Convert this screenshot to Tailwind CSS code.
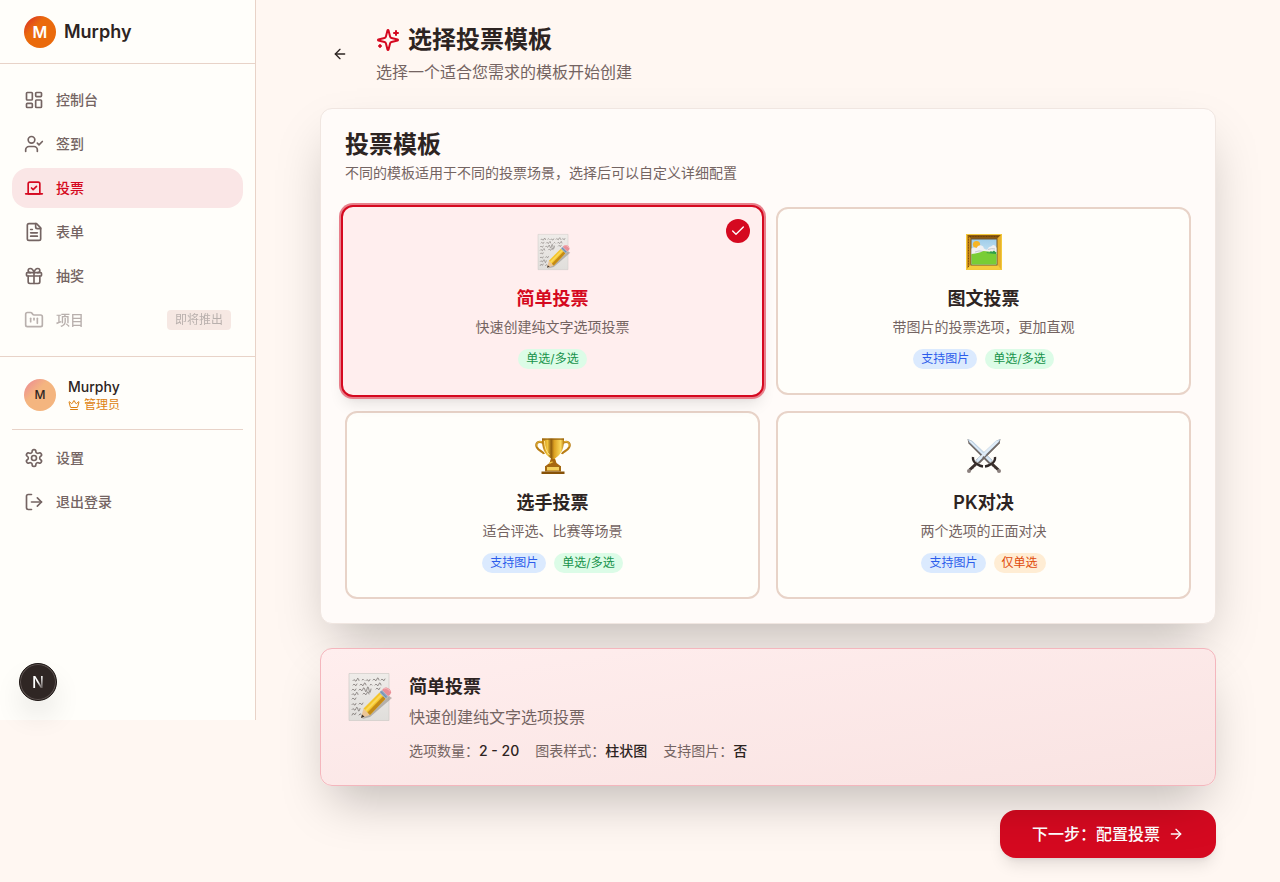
<!DOCTYPE html>
<html lang="zh-CN">
<head>
    <meta charset="UTF-8">
    <meta name="viewport" content="width=device-width, initial-scale=1.0">
    <title>选择投票模板</title>
    <script src="https://cdn.jsdelivr.net/npm/@tailwindcss/browser@4"></script>
</head>
<body class="min-h-screen bg-[#fff7f2] font-['Inter','Noto_Sans_CJK_SC',sans-serif] text-[#2d2422]">

    <!-- Emoji artwork shared by the cards -->
    <svg class="absolute size-0" aria-hidden="true">
        <defs>
            <linearGradient id="gold" x1="0" x2="1"><stop offset="0" stop-color="#b5740c"/><stop offset=".25" stop-color="#f3c63c"/><stop offset=".42" stop-color="#8f5c0e"/><stop offset=".55" stop-color="#dba021"/><stop offset=".85" stop-color="#fbd95c"/><stop offset="1" stop-color="#b8790f"/></linearGradient>
            <linearGradient id="paper" x1="0" y1="0" x2="0" y2="1"><stop offset="0" stop-color="#efece9"/><stop offset="1" stop-color="#e0dedb"/></linearGradient>
            <linearGradient id="sky" x1="0" y1="0" x2="0" y2="1"><stop offset="0" stop-color="#9fcdea"/><stop offset="1" stop-color="#e3f1f7"/></linearGradient>
        </defs>
        <symbol id="memo" viewBox="0 0 48 48">
            <path d="M4 .5h40v47H4z" fill="url(#paper)" stroke="#cfcbc7" stroke-width=".7"/>
            <g fill="none" stroke="#7a7471" stroke-width=".8" stroke-linecap="round">
                <path d="M8 7.500q1-2 2 0t2-1 2 1M17 7q1-2 2 0M21 7.500q1-2 2 0t2-1M28 7q1-2 2 0t2-1 2 1M36 7q1-2 2 0t2-1"/>
                <path d="M8 12q1-2 2 0t2-1M15 12q1-2 2 0t2-1 2 1M25 12q1-2 2 0M30 12q1-2 2 0t2-1 2 1"/>
                <path d="M7 17q1-2 2 0t2-1M14 17q1-2 2 0t2-1 2 1 2-1 2 1 2-1M31 16q1-2 2 0t2-1"/>
                <path d="M7 21.500q1-2 2 0t2-1 2 1M18 21q1-2 2 0t2-1 2 1"/>
                <path d="M7 26q1-2 2 0t2-1"/>
                <path d="M7 31.500q1-2 2 0t2-1M14 31q1-2 2 0t2-1"/>
                <path d="M7 36.500q1-2 2 0t2-1 2 1 2-1"/>
                <path d="M7 42q1-3 2-1t2-1M14 42q1-2 2-1"/>
            </g>
            <path d="M17 46 44 23l3 2-22 19z" fill="#77706b" opacity=".45"/>
            <path d="m18.500 35.500-2.500 9.500 9-3z" fill="#ecc596"/>
            <path d="m17 41.500-1 3.500 3.600-1.200z" fill="#39302c"/>
            <path d="M18.500 35.500 34.500 19.500l6 6.300L25 42z" fill="#f4c52b"/>
            <path d="m22.500 39.500 15.700-16.200 2.300 2.500L25 42z" fill="#c48a17"/>
            <path d="m20 37 15.800-16 1.500 1.500L21.500 38.500z" fill="#fbd85a"/>
            <path d="m34.500 19.500 2.600-2.500 6 6.300-2.600 2.500z" fill="#8fa9c4"/>
            <path d="m35.700 18.300 6 6.200" stroke="#5c7896" stroke-width=".7"/>
            <path d="m37.100 17 1.700-1.700c3-2.700 9.500 2.500 6.500 6l-2.200 2z" fill="#e98e96"/>
            <path d="m39 16c2-1.500 5 .5 6 2.500" stroke="#f7bcc0" fill="none"/>
        </symbol>
        <symbol id="picture" viewBox="0 0 36 36">
            <rect width="36" height="36" rx="1" fill="#d99a17"/>
            <path d="M1 1h34l-4 4H5z" fill="#8d5a10"/>
            <path d="M1 1v34l4-4V5z" fill="#d08f18"/>
            <path d="M35 1v34l-4-4V5z" fill="#e8b12c"/>
            <path d="M1 35h34l-4-5H5z" fill="#f6cc3d"/>
            <path d="M.500.500h35v35H.500z" fill="none" stroke="#f3c93b"/>
            <path d="M2.500 33V2.500H33" fill="none" stroke="#5f3b0b" stroke-width=".8" stroke-dasharray="1 .6"/>
            <rect x="5" y="5" width="26" height="26" fill="url(#sky)" stroke="#6f5632"/>
            <circle cx="10.500" cy="10.500" r="3.600" fill="#f6b526"/>
            <path d="M5.500 20.500v-6q3-1.500 5-.5 1.500-3.500 5-2.500 2 .500 2.500 3 1.500 1.500 3.500 1 1-3 3.500-3l2-1.500q2.500 0 3.500 3v6z" fill="#f1f0f1"/>
            <path d="M9 18q4-2 8-.5M22 15.500q4-1.500 7-.5" stroke="#c4c9d1" fill="none"/>
            <path d="M5.500 20q8-1 12-3 8 1 13 1v12.500h-25z" fill="#79cd35"/>
            <path d="m20 19 2-1 1 1 2-2 1 1 2-1.500 2 2v1.500z" fill="#2f9e4b"/>
        </symbol>
        <symbol id="trophy" viewBox="0 0 36 36">
            <path d="M8.500 5C3 2 0 5.500 2 9.500s6 3.500 7 6.500M27.500 5C33 2 36 5.500 34 9.500s-6 3.500-7 6.500" fill="none" stroke="#b97d14" stroke-width="2.200"/>
            <path d="M8.500 4.500C3 2 .500 5.500 2.500 9M27.500 4.500C33 2 35.500 5.500 33.500 9" fill="none" stroke="#f5cd4a" stroke-width=".8"/>
            <path d="M7 .500h22c.5 9-2.500 16-9 20l1 4h-6l1-4C9.500 16.500 6.500 9.500 7 .500z" fill="url(#gold)"/>
            <path d="M7 .500h22v1.200H7z" fill="#946111"/>
            <path d="M9.500 3c0 6 2 11 5 14" fill="none" stroke="#ffe58a" stroke-width="1"/>
            <path d="M16 21h4l1.500 4 4 3h-15l4-3z" fill="#a76710"/>
            <path d="M10 28h16v5.500H10z" fill="#a46a13"/>
            <path d="M12 29h12v3.500H12z" fill="#f4cf5c"/>
            <path d="M6.500 33.500h23V36h-23z" fill="#875208"/>
            <path d="m14 24.500 3-1 1.500.5-4 2z" fill="#f5cb49"/>
        </symbol>
        <symbol id="swords" viewBox="0 0 36 36">
            <g id="sword">
                <path d="m34.500 1-1 4.500L13 26l-3.500-3.500L30 3z" fill="#6b625f"/>
                <path d="m34.500 1-2 3.500L12 24.500l-2.500-2L29.500 3z" fill="#c7dbed"/>
                <path d="M32 3 11 23.500" stroke="#f2f8fd" stroke-width=".8"/>
                <path d="M7 19q-.5 4 3 6.500T17 28.500" fill="none" stroke="#302826" stroke-width="2.400"/>
                <path d="m10.500 25.500-7 6.500" stroke="#3a302d" stroke-width="3"/>
                <path d="m9 28 1 1m-3 1 1 1" stroke="#948783" stroke-width=".6"/>
                <circle cx="3" cy="33" r="2" fill="#8b807d"/>
            </g>
            <use href="#sword" transform="matrix(-1 0 0 1 36 0)"/>
            <path d="m31.500 3-19 18.500" stroke="#e0ecf7" stroke-width="2"/>
            <path d="m33.500 4.500-20 20" stroke="#716967" stroke-width="1.200"/>
        </symbol>
    </svg>

    <div class="flex items-start">

        <!-- Sidebar -->
        <aside class="relative flex h-[720px] w-64 shrink-0 flex-col border-r border-[#e8d3c8] bg-[#fffefa]">
            <div class="flex h-16 items-center gap-2 border-b border-[#e8d3c8] px-6">
                <div class="flex size-8 items-center justify-center rounded-full bg-linear-to-br from-[#d50920] to-[#ea6a0c] to-35% font-semibold text-white">M</div>
                <span class="text-lg font-semibold">Murphy</span>
            </div>

            <nav class="flex flex-col gap-1 border-b border-[#e8d3c8] px-3 py-4 text-sm font-medium text-[#746462]" aria-label="主导航">
                <a href="#" class="flex h-10 items-center gap-3 rounded-2xl px-3">
                    <svg class="size-5" viewBox="0 0 24 24" fill="none" stroke="currentColor" stroke-width="2" stroke-linecap="round" stroke-linejoin="round" aria-hidden="true"><rect width="7" height="9" x="3" y="3" rx="1"/><rect width="7" height="5" x="14" y="3" rx="1"/><rect width="7" height="9" x="14" y="12" rx="1"/><rect width="7" height="5" x="3" y="16" rx="1"/></svg>
                    控制台
                </a>
                <a href="#" class="flex h-10 items-center gap-3 rounded-2xl px-3">
                    <svg class="size-5" viewBox="0 0 24 24" fill="none" stroke="currentColor" stroke-width="2" stroke-linecap="round" stroke-linejoin="round" aria-hidden="true"><path d="m16 11 2 2 4-4"/><path d="M16 21v-2a4 4 0 0 0-4-4H6a4 4 0 0 0-4 4v2"/><circle cx="9" cy="7" r="4"/></svg>
                    签到
                </a>
                <a href="#" class="flex h-10 items-center gap-3 rounded-2xl bg-[#fae6e6] px-3 text-[#d50920]" aria-current="page">
                    <svg class="size-5" viewBox="0 0 24 24" fill="none" stroke="currentColor" stroke-width="2" stroke-linecap="round" stroke-linejoin="round" aria-hidden="true"><path d="m9 12 2 2 4-4"/><path d="M5 7c0-1.100.9-2 2-2h10a2 2 0 0 1 2 2v12H5V7Z"/><path d="M22 19H2"/></svg>
                    投票
                </a>
                <a href="#" class="flex h-10 items-center gap-3 rounded-2xl px-3">
                    <svg class="size-5" viewBox="0 0 24 24" fill="none" stroke="currentColor" stroke-width="2" stroke-linecap="round" stroke-linejoin="round" aria-hidden="true"><path d="M15 2H6a2 2 0 0 0-2 2v16a2 2 0 0 0 2 2h12a2 2 0 0 0 2-2V7Z"/><path d="M14 2v4a2 2 0 0 0 2 2h4"/><path d="M10 9H8"/><path d="M16 13H8"/><path d="M16 17H8"/></svg>
                    表单
                </a>
                <a href="#" class="flex h-10 items-center gap-3 rounded-2xl px-3">
                    <svg class="size-5" viewBox="0 0 24 24" fill="none" stroke="currentColor" stroke-width="2" stroke-linecap="round" stroke-linejoin="round" aria-hidden="true"><rect x="3" y="8" width="18" height="4" rx="1"/><path d="M12 8v13"/><path d="M19 12v7a2 2 0 0 1-2 2H7a2 2 0 0 1-2-2v-7"/><path d="M7.500 8a2.500 2.500 0 0 1 0-5A4.800 8 0 0 1 12 8a4.800 8 0 0 1 4.500-5 2.500 2.500 0 0 1 0 5"/></svg>
                    抽奖
                </a>
                <a href="#" class="flex h-10 items-center gap-3 rounded-2xl px-3 opacity-50" aria-disabled="true">
                    <svg class="size-5" viewBox="0 0 24 24" fill="none" stroke="currentColor" stroke-width="2" stroke-linecap="round" stroke-linejoin="round" aria-hidden="true"><path d="M4 20h16a2 2 0 0 0 2-2V8a2 2 0 0 0-2-2h-7.930a2 2 0 0 1-1.660-.9l-.820-1.200A2 2 0 0 0 7.930 3H4a2 2 0 0 0-2 2v13c0 1.100.9 2 2 2Z"/><path d="M8 10v4"/><path d="M12 10v2"/><path d="M16 10v6"/></svg>
                    <span class="flex-1">项目</span>
                    <span class="rounded bg-[#eed4ce] px-2 py-0.5 text-xs font-normal">即将推出</span>
                </a>
            </nav>

            <div class="p-3">
                <div class="flex items-center gap-3 px-3 py-2">
                    <div class="flex size-8 items-center justify-center rounded-full bg-linear-to-br from-[#ea8494] to-[#f4b57f] to-40% text-xs font-medium">M</div>
                    <div>
                        <p class="text-sm font-medium">Murphy</p>
                        <p class="flex items-center gap-1 text-xs text-[#dd8110]">
                            <svg class="size-3" viewBox="0 0 24 24" fill="none" stroke="currentColor" stroke-width="2" stroke-linecap="round" stroke-linejoin="round" aria-hidden="true"><path d="M11.562 3.266a.5.5 0 0 1 .876 0L15.390 8.870a1 1 0 0 0 1.516.294L21.183 5.500a.5.5 0 0 1 .798.519l-2.834 10.246a1 1 0 0 1-.956.734H5.810a1 1 0 0 1-.957-.734L2.020 6.020a.5.5 0 0 1 .798-.519l4.276 3.664a1 1 0 0 0 1.516-.294z"/><path d="M5 21h14"/></svg>
                            管理员
                        </p>
                    </div>
                </div>
                <div class="mt-2 flex flex-col gap-1 border-t border-[#e8d3c8] pt-2 text-sm font-medium text-[#746462]">
                    <a href="#" class="flex h-10 items-center gap-3 px-3">
                        <svg class="size-5" viewBox="0 0 24 24" fill="none" stroke="currentColor" stroke-width="2" stroke-linecap="round" stroke-linejoin="round" aria-hidden="true"><path d="M12.220 2h-.440a2 2 0 0 0-2 2v.180a2 2 0 0 1-1 1.730l-.430.250a2 2 0 0 1-2 0l-.150-.080a2 2 0 0 0-2.730.730l-.220.380a2 2 0 0 0 .730 2.730l.150.100a2 2 0 0 1 1 1.720v.510a2 2 0 0 1-1 1.740l-.150.090a2 2 0 0 0-.730 2.730l.220.380a2 2 0 0 0 2.730.730l.150-.080a2 2 0 0 1 2 0l.430.250a2 2 0 0 1 1 1.730V20a2 2 0 0 0 2 2h.440a2 2 0 0 0 2-2v-.180a2 2 0 0 1 1-1.730l.430-.250a2 2 0 0 1 2 0l.150.080a2 2 0 0 0 2.730-.730l.220-.390a2 2 0 0 0-.730-2.730l-.150-.080a2 2 0 0 1-1-1.740v-.500a2 2 0 0 1 1-1.740l.150-.090a2 2 0 0 0 .730-2.730l-.220-.380a2 2 0 0 0-2.730-.730l-.150.080a2 2 0 0 1-2 0l-.430-.250a2 2 0 0 1-1-1.730V4a2 2 0 0 0-2-2z"/><circle cx="12" cy="12" r="3"/></svg>
                        设置
                    </a>
                    <button type="button" class="flex h-10 items-center gap-3 px-3">
                        <svg class="size-5" viewBox="0 0 24 24" fill="none" stroke="currentColor" stroke-width="2" stroke-linecap="round" stroke-linejoin="round" aria-hidden="true"><path d="m16 17 5-5-5-5"/><path d="M21 12H9"/><path d="M9 21H5a2 2 0 0 1-2-2V5a2 2 0 0 1 2-2h4"/></svg>
                        退出登录
                    </button>
                </div>
            </div>

            <!-- Dev tools badge -->
            <button type="button" class="absolute bottom-[19px] left-[19px] flex size-[38px] items-center justify-center rounded-full border border-[#1d1614] bg-[#2f2624] text-base font-medium shadow-[inset_0_0_0_1px_#5e5452,0_16px_32px_-8px_#0000003d]" aria-label="Next.js">
                <span class="bg-linear-to-br from-white from-50% to-[#2f2624] to-90% bg-clip-text text-transparent">N</span>
            </button>
        </aside>

        <!-- Content -->
        <main class="min-w-0 flex-1 py-6">
            <div class="mx-auto flex max-w-4xl flex-col gap-6">
                <header class="flex items-center gap-4">
                    <button type="button" class="flex size-10 items-center justify-center" aria-label="返回">
                        <svg class="size-4" viewBox="0 0 24 24" fill="none" stroke="currentColor" stroke-width="2" stroke-linecap="round" stroke-linejoin="round" aria-hidden="true"><path d="m12 19-7-7 7-7"/><path d="M19 12H5"/></svg>
                    </button>
                    <div>
                        <h1 class="flex items-center gap-2 text-2xl font-semibold">
                            <svg class="size-6 text-[#d50920]" viewBox="0 0 24 24" fill="none" stroke="currentColor" stroke-width="2" stroke-linecap="round" stroke-linejoin="round" aria-hidden="true"><path d="M9.937 15.500A2 2 0 0 0 8.500 14.063l-6.135-1.582a.5.5 0 0 1 0-.962L8.500 9.936A2 2 0 0 0 9.937 8.500l1.582-6.135a.5.5 0 0 1 .963 0L14.063 8.500A2 2 0 0 0 15.500 9.937l6.135 1.581a.5.5 0 0 1 0 .964L15.500 14.063a2 2 0 0 0-1.437 1.437l-1.582 6.135a.5.5 0 0 1-.963 0z"/><path d="M20 3v4"/><path d="M22 5h-4"/><path d="M4 17v2"/><path d="M5 18H3"/></svg>
                            选择投票模板
                        </h1>
                        <p class="mt-1 text-[#746462]">选择一个适合您需求的模板开始创建</p>
                    </div>
                </header>

                <section class="relative rounded-xl border border-[#f0e6e1] bg-[#fffbf9] p-6 shadow-2xl">
                    <h2 class="text-2xl leading-none font-semibold">投票模板</h2>
                    <p class="mt-1.5 text-sm text-[#746462]">不同的模板适用于不同的投票场景，选择后可以自定义详细配置</p>

                    <div class="mt-6 grid grid-cols-2 gap-4">
                        <button type="button" class="relative -mx-1 -my-0.5 flex flex-col items-center rounded-xl border-2 border-[#d50920] bg-[#ffeeee] px-6 py-[26px] shadow-lg ring-2 ring-[#e87f8b]" aria-pressed="true">
                            <span class="absolute top-3 right-3 flex size-6 items-center justify-center rounded-full bg-[#d50920] text-white">
                                <svg class="size-4" viewBox="0 0 24 24" fill="none" stroke="currentColor" stroke-width="2" stroke-linecap="round" stroke-linejoin="round" aria-hidden="true"><path d="M20 6 9 17l-5-5"/></svg>
                            </span>
                            <svg class="h-[38px] w-9" aria-hidden="true"><use href="#memo"/></svg>
                            <span class="mt-3.5 text-lg leading-7 font-semibold text-[#d50920]">简单投票</span>
                            <span class="mt-1 text-sm text-[#746462]">快速创建纯文字选项投票</span>
                            <span class="mt-3 flex gap-2 text-xs">
                                <span class="rounded-full bg-[#dcfce7] px-2 py-0.5 text-[#16924a]">单选/多选</span>
                            </span>
                        </button>

                        <button type="button" class="flex flex-col items-center rounded-xl border-2 border-[#e8d3c8] bg-[#fffefa] p-6" aria-pressed="false">
                            <svg class="h-[38px] w-9" aria-hidden="true"><use href="#picture"/></svg>
                            <span class="mt-3.5 text-lg leading-7 font-semibold">图文投票</span>
                            <span class="mt-1 text-sm text-[#746462]">带图片的投票选项，更加直观</span>
                            <span class="mt-3 flex gap-2 text-xs">
                                <span class="rounded-full bg-[#dbeafe] px-2 py-0.5 text-[#2b5ceb]">支持图片</span>
                                <span class="rounded-full bg-[#dcfce7] px-2 py-0.5 text-[#16924a]">单选/多选</span>
                            </span>
                        </button>

                        <button type="button" class="flex flex-col items-center rounded-xl border-2 border-[#e8d3c8] bg-[#fffefa] p-6" aria-pressed="false">
                            <svg class="h-[38px] w-9" aria-hidden="true"><use href="#trophy"/></svg>
                            <span class="mt-3.5 text-lg leading-7 font-semibold">选手投票</span>
                            <span class="mt-1 text-sm text-[#746462]">适合评选、比赛等场景</span>
                            <span class="mt-3 flex gap-2 text-xs">
                                <span class="rounded-full bg-[#dbeafe] px-2 py-0.5 text-[#2b5ceb]">支持图片</span>
                                <span class="rounded-full bg-[#dcfce7] px-2 py-0.5 text-[#16924a]">单选/多选</span>
                            </span>
                        </button>

                        <button type="button" class="flex flex-col items-center rounded-xl border-2 border-[#e8d3c8] bg-[#fffefa] p-6" aria-pressed="false">
                            <svg class="h-[38px] w-9" aria-hidden="true"><use href="#swords"/></svg>
                            <span class="mt-3.5 text-lg leading-7 font-semibold">PK对决</span>
                            <span class="mt-1 text-sm text-[#746462]">两个选项的正面对决</span>
                            <span class="mt-3 flex gap-2 text-xs">
                                <span class="rounded-full bg-[#dbeafe] px-2 py-0.5 text-[#2b5ceb]">支持图片</span>
                                <span class="rounded-full bg-[#ffedd4] px-2 py-0.5 text-[#e04a0a]">仅单选</span>
                            </span>
                        </button>
                    </div>
                </section>

                <!-- Selected template -->
                <section class="relative flex items-start gap-4 rounded-xl border border-[#f4b6bd] bg-linear-to-br from-[#ffeeee] to-[#f9e3e2] p-6 shadow-2xl">
                    <svg class="size-12 shrink-0" aria-hidden="true"><use href="#memo"/></svg>
                    <div>
                        <h3 class="text-lg leading-7 font-semibold">简单投票</h3>
                        <p class="mt-1 text-[#746462]">快速创建纯文字选项投票</p>
                        <dl class="mt-3 flex gap-4 text-sm">
                            <div class="flex"><dt class="text-[#746462]">选项数量：</dt><dd class="font-medium">2 - 20</dd></div>
                            <div class="flex"><dt class="text-[#746462]">图表样式：</dt><dd class="font-medium">柱状图</dd></div>
                            <div class="flex"><dt class="text-[#746462]">支持图片：</dt><dd class="font-medium">否</dd></div>
                        </dl>
                    </div>
                </section>

                <div class="flex justify-end">
                    <button type="button" class="flex h-12 items-center gap-2 rounded-2xl bg-[#d50920] px-8 font-medium text-white shadow-lg">
                        下一步：配置投票
                        <svg class="size-4" viewBox="0 0 24 24" fill="none" stroke="currentColor" stroke-width="2" stroke-linecap="round" stroke-linejoin="round" aria-hidden="true"><path d="M5 12h14"/><path d="m12 5 7 7-7 7"/></svg>
                    </button>
                </div>
            </div>
        </main>
    </div>

</body>
</html>
